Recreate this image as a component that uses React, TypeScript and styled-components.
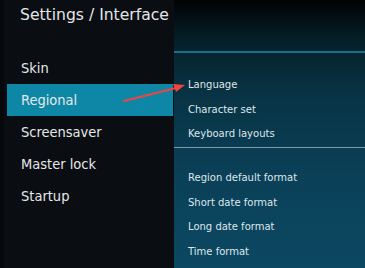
import React from 'react';
import styled, { createGlobalStyle } from 'styled-components';

const GlobalStyle = createGlobalStyle`
  html, body {
    margin: 0;
    padding: 0;
    background: #05080b;
  }
  body {
    font-family: "DejaVu Sans", "Liberation Sans", sans-serif;
  }
`;

const Screen = styled.div`
  position: relative;
  width: 365px;
  height: 268px;
  display: flex;
  overflow: hidden;
  background: #06090c;
`;

const Sidebar = styled.div`
  width: 170px;
  margin-left: 4px;
  display: flex;
  flex-direction: column;
  background: #0a0e12;
`;

const Title = styled.div`
  padding: 6px 0 0 16px;
  height: 52px;
  box-sizing: border-box;
  font-size: 15.6px;
  color: #e4e6e8;
  white-space: nowrap;
`;

const Menu = styled.div`
  display: flex;
  flex-direction: column;
`;

const MenuItem = styled.div<{ $active?: boolean }>`
  height: 32px;
  margin: 0 1px 0 3px;
  padding-left: 14px;
  display: flex;
  align-items: center;
  font-family: "DejaVu Sans Condensed", "DejaVu Sans", sans-serif;
  font-stretch: condensed;
  font-size: 14.5px;
  color: #e6e8ea;
  background: ${p => (p.$active ? '#0e87a6' : 'transparent')};
`;

const Content = styled.div`
  flex: 1;
  display: flex;
  flex-direction: column;
  background: linear-gradient(180deg, #010304 0%, #05212b 16%, #083344 35%, #0a4058 65%, #0c4862 100%);
`;

const TopLine = styled.div`
  margin-top: 51px;
  height: 2px;
  background: #17708c;
`;

const Group = styled.div<{ $top?: number }>`
  display: flex;
  flex-direction: column;
  padding-top: ${p => p.$top ?? 0}px;
`;

const Option = styled.div`
  height: 24.7px;
  display: flex;
  align-items: center;
  padding-left: 14px;
  font-size: 10px;
  color: #dfe6ea;
  white-space: nowrap;
`;

const Divider = styled.div`
  height: 1px;
  margin: 1px 0 17px;
  background: #7d9aa6;
`;

const Arrow = styled.svg`
  position: absolute;
  left: 0;
  top: 0;
  pointer-events: none;
`;

const regional = ['Language', 'Character set', 'Keyboard layouts'];
const formats = ['Region default format', 'Short date format', 'Long date format', 'Time format'];
const sections = ['Skin', 'Regional', 'Screensaver', 'Master lock', 'Startup'];

export default function App() {
  return (
    <>
      <GlobalStyle />
      <Screen>
        <Sidebar>
          <Title>Settings / Interface</Title>
          <Menu>
            {sections.map(s => (
              <MenuItem key={s} $active={s === 'Regional'}>{s}</MenuItem>
            ))}
          </Menu>
        </Sidebar>
        <Content>
          <TopLine />
          <Group $top={19}>
            {regional.map(o => <Option key={o}>{o}</Option>)}
          </Group>
          <Divider />
          <Group>
            {formats.map(o => <Option key={o}>{o}</Option>)}
          </Group>
        </Content>
        <Arrow width="365" height="268" viewBox="0 0 365 268">
          <path d="M124 101 L176 88" stroke="#f0453f" strokeWidth="2" strokeLinecap="round" />
          <path d="M185 85 L173 84 L176 92 Z" fill="#f0453f" />
        </Arrow>
      </Screen>
    </>
  );
}
